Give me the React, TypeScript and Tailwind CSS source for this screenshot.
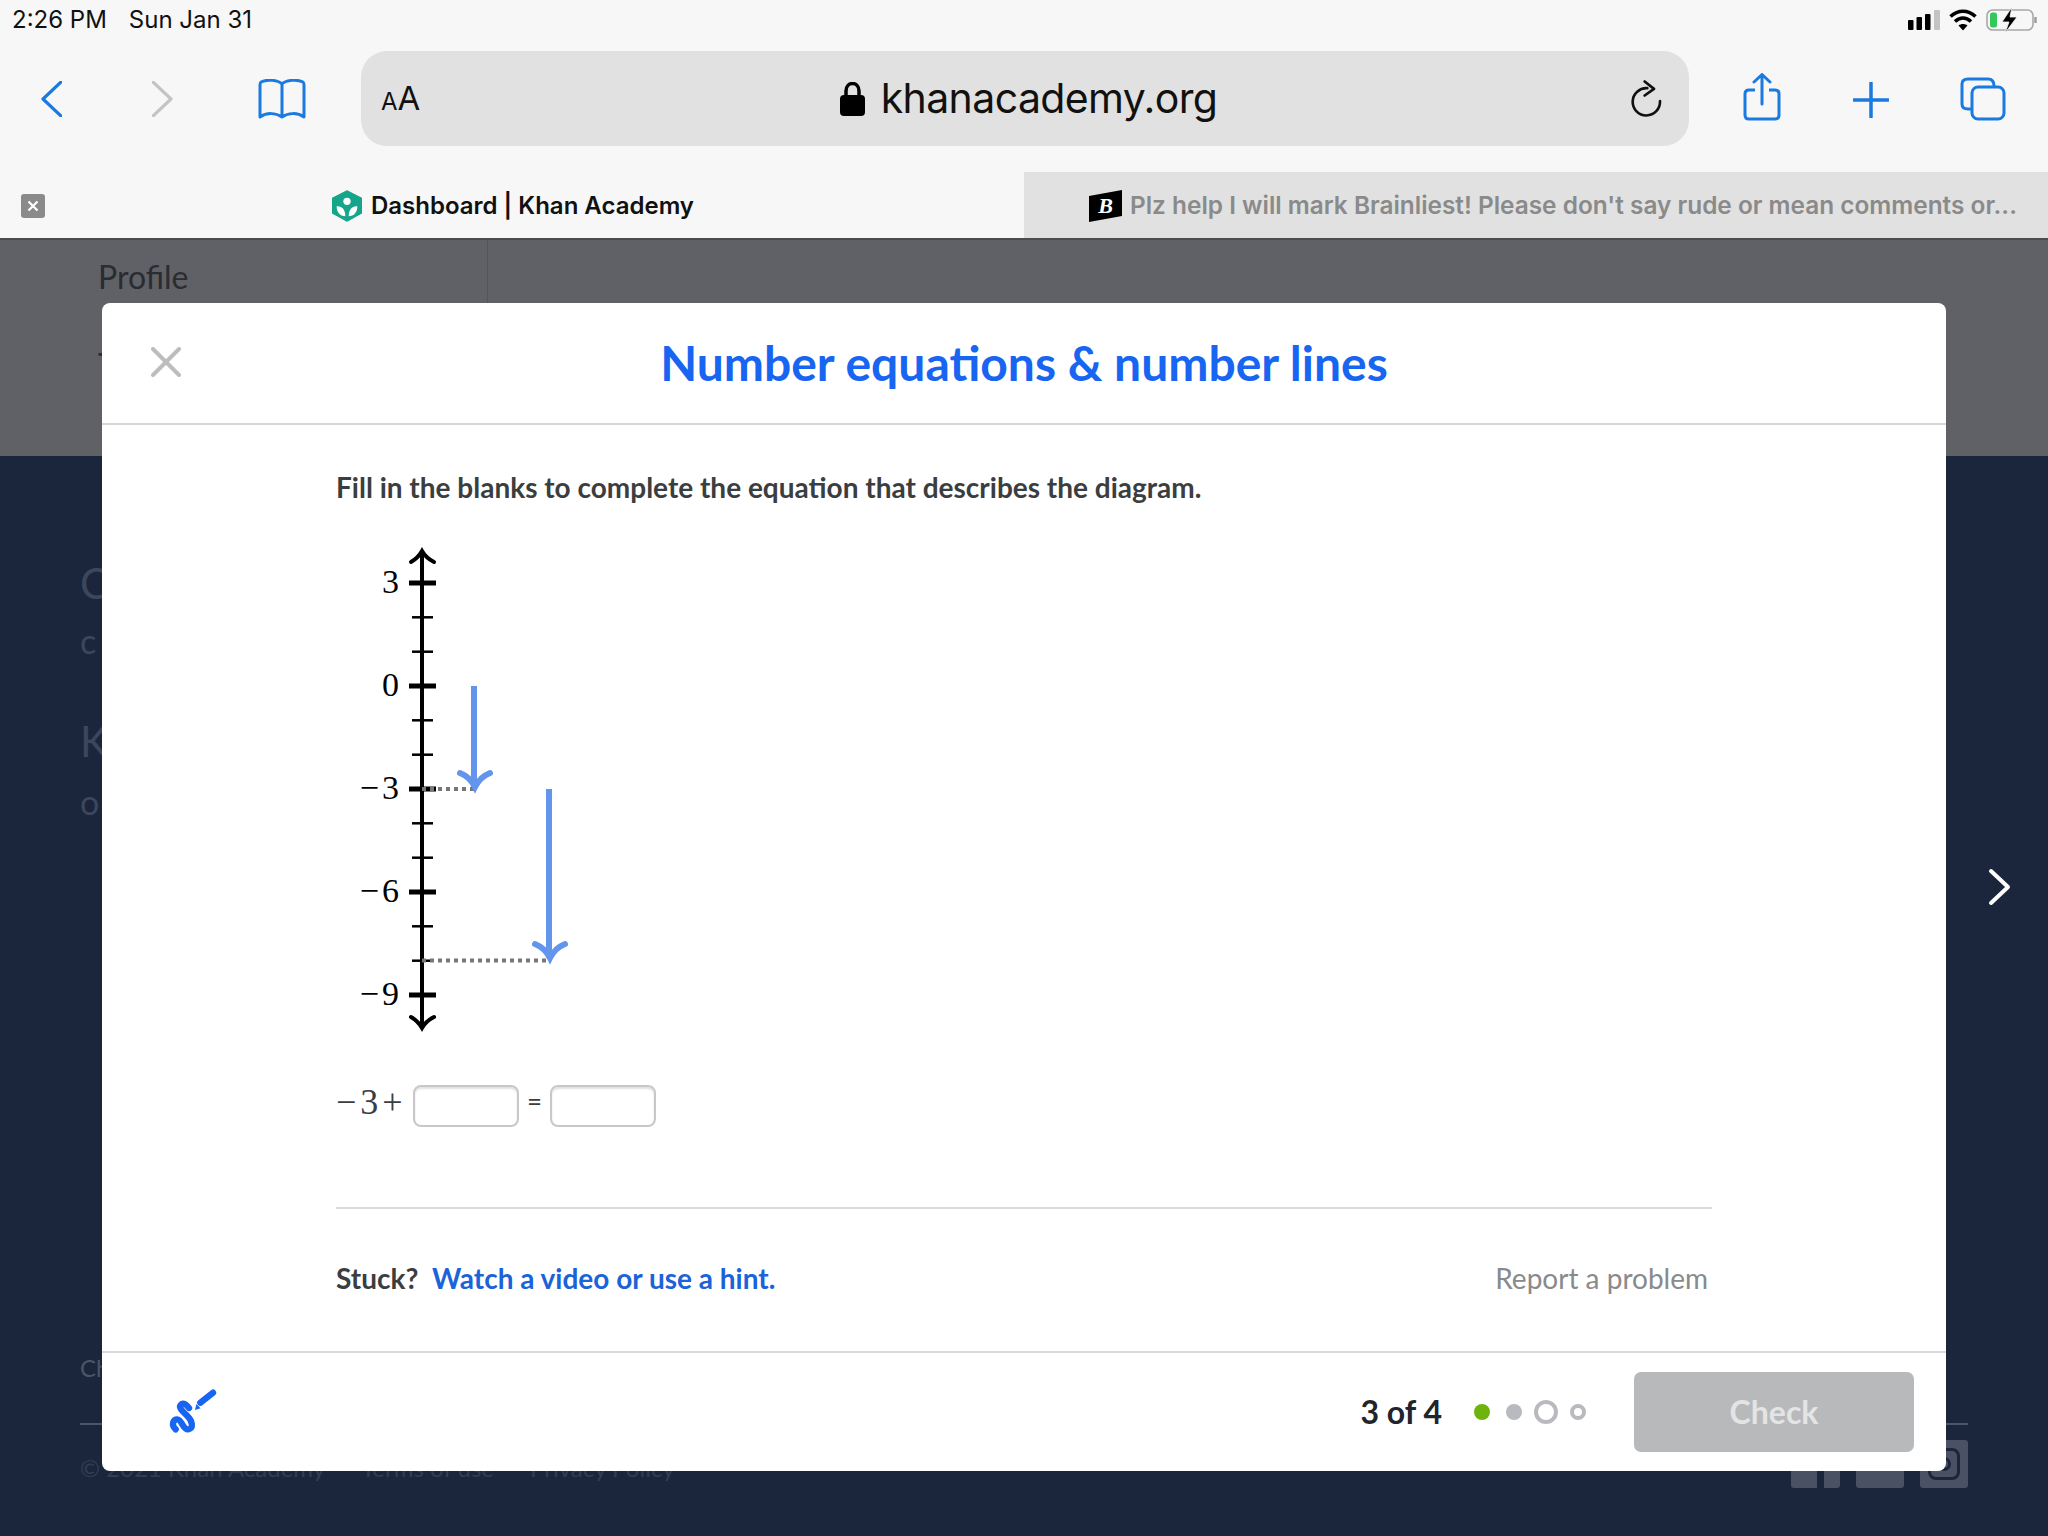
const MATH = "font-['Liberation_Serif',serif]";

const majors = [43, 146, 249, 352, 455];
const minors = [77.3, 111.7, 180.3, 214.7, 283.3, 317.7, 386.3, 420.7];

function Label({ t, y }: { t: string; y: number }) {
  const neg = t.length > 1;
  return (
    <text x="63" y={y + 10} textAnchor="end" fontSize="34" fontFamily="'Liberation Serif', serif" fill="#000">
      {neg ? "−" : ""}
      <tspan dx={neg ? 3 : 0}>{neg ? t.slice(1) : t}</tspan>
    </text>
  );
}

function NumberLine() {
  return (
    <svg width="240" height="500" viewBox="0 0 240 500" className="block">
      <line x1="86" y1="12" x2="86" y2="486" stroke="#000" strokeWidth="4" />
      <path d="M75 22 Q82 18 86 11 Q90 18 98 22" fill="none" stroke="#000" strokeWidth="4" strokeLinecap="round" />
      <path d="M75 477 Q82 481 86 488 Q90 481 98 477" fill="none" stroke="#000" strokeWidth="4" strokeLinecap="round" />
      {majors.map((y) => (
        <line key={y} x1="73" x2="100" y1={y} y2={y} stroke="#000" strokeWidth="5" />
      ))}
      {minors.map((y) => (
        <line key={y} x1="76" x2="97" y1={y} y2={y} stroke="#000" strokeWidth="2.5" />
      ))}
      <Label t="3" y={43} />
      <Label t="0" y={146} />
      <Label t="−3" y={249} />
      <Label t="−6" y={352} />
      <Label t="−9" y={455} />
      <line x1="86" x2="138" y1="249" y2="249" stroke="#777" strokeWidth="4" strokeDasharray="4 4" />
      <line x1="86" x2="212" y1="420.5" y2="420.5" stroke="#777" strokeWidth="4" strokeDasharray="4 4" />
      <line x1="138" x2="138" y1="146" y2="247" stroke="#6495ed" strokeWidth="6" />
      <path d="M124 233 Q134 237 139 247 Q144 237 154 233" fill="none" stroke="#6495ed" strokeWidth="6" strokeLinecap="round" />
      <line x1="213" x2="213" y1="249" y2="418" stroke="#6495ed" strokeWidth="6" />
      <path d="M199 404 Q209 408 214 418 Q219 408 229 404" fill="none" stroke="#6495ed" strokeWidth="6" strokeLinecap="round" />
    </svg>
  );
}

function Pencil() {
  return (
    <svg width="70" height="70" viewBox="0 0 210 210" className="mt-[6px] block">
      <path d="M50 148 C36 135 42 118 55 118 C68 118 72 150 88 148 C105 146 100 122 85 108 C72 95 55 82 68 72 C76 68 85 78 90 84" fill="none" stroke="#1865f2" strokeWidth="19" strokeLinecap="round" strokeLinejoin="round" />
      <path d="M162 38 L124 68" stroke="#1865f2" strokeWidth="19" strokeLinecap="round" />
      <path d="M108 90 L112 72 L125 85 Z" fill="#1865f2" />
    </svg>
  );
}

function StatusIcons() {
  return (
    <div className="flex items-center">
      <svg width="32" height="20" viewBox="0 0 32 20">
        <rect x="0" y="10" width="5.5" height="10" rx="1" fill="#000" />
        <rect x="8.5" y="7" width="5.5" height="13" rx="1" fill="#000" />
        <rect x="17" y="4" width="5.5" height="16" rx="1" fill="#000" />
        <rect x="26" y="0" width="6" height="20" rx="1" fill="#c4c4c4" />
      </svg>
      <svg width="28" height="22" viewBox="0 0 28 22" className="ml-[9px]">
        <path d="M1.5 7.5 C9 0.5 19 0.5 26.5 7.5" fill="none" stroke="#000" strokeWidth="3.6" />
        <path d="M6 12.5 C11 8 17 8 22 12.5" fill="none" stroke="#000" strokeWidth="3.6" />
        <path d="M9.5 16.5 C12 14.5 16 14.5 18.5 16.5 L14 21.5 Z" fill="#000" />
      </svg>
      <svg width="52" height="26" viewBox="0 0 52 26" className="ml-[9px]">
        <rect x="1" y="3" width="46" height="20" rx="5.5" fill="none" stroke="#a8a8a8" strokeWidth="1.6" />
        <rect x="4" y="5.5" width="7" height="15" rx="2.5" fill="#34c759" />
        <path d="M49.5 10 L49.5 16" fill="none" stroke="#999" strokeWidth="2.4" />
        <path d="M26 0 L16 15 L23 15 L19 26 L31 10 L24 10 Z" fill="#000" stroke="#f7f7f7" strokeWidth="0.8" />
      </svg>
    </div>
  );
}

function KhanLogo() {
  return (
    <svg width="30" height="32" viewBox="22 13 90 96" className="block">
      <path d="M67 15 L112 38 L112 82 L67 107 L22 82 L22 38 Z" fill="#14a58a" stroke="#14a58a" strokeWidth="3" strokeLinejoin="round" />
      <circle cx="67" cy="47" r="11" fill="#fff" />
      <path d="M36 62 C50 60 62 70 62 92 C46 92 36 80 36 62 Z" fill="#fff" />
      <path d="M98 62 C84 60 72 70 72 92 C88 92 98 80 98 62 Z" fill="#fff" />
    </svg>
  );
}

function BrainlyLogo() {
  return (
    <svg width="33" height="32" viewBox="0 0 33 32" className="block">
      <path d="M0 6 L33 0 L33 26 L0 32 Z" fill="#000" />
      <text x="16.5" y="23" textAnchor="middle" fontSize="22" fontWeight="700" fontStyle="italic" fontFamily="'Liberation Serif', serif" fill="#fff">B</text>
    </svg>
  );
}

function Toolbar() {
  const blue = "#1a7ae0";
  return (
    <div className="flex h-[132px] items-start">
      <svg width="21" height="36" viewBox="0 0 21 36" className="ml-[41px] mt-[41px] shrink-0">
        <path d="M20 1 L2 18 L20 35" fill="none" stroke={blue} strokeWidth="3.2" strokeLinecap="round" strokeLinejoin="round" />
      </svg>
      <svg width="21" height="36" viewBox="0 0 21 36" className="ml-[90px] mt-[41px] shrink-0">
        <path d="M1 1 L19 18 L1 35" fill="none" stroke="#c4c4c4" strokeWidth="3.2" strokeLinecap="round" strokeLinejoin="round" />
      </svg>
      <svg width="48" height="40" viewBox="0 0 48 40" className="ml-[85px] mt-[39px] shrink-0">
        <path d="M24 5 C20 1 9 0 3 3 C2 4 2 5 2 6 L2 38 C9 33 18 34 24 38 C30 34 39 33 46 38 L46 6 C46 5 46 4 45 3 C39 0 28 1 24 5 Z M24 5 L24 37" fill="none" stroke={blue} strokeWidth="3" strokeLinejoin="round" />
      </svg>
      <div className="ml-[55px] mt-[11px] flex h-[95px] w-[1328px] shrink-0 items-center rounded-[26px] bg-[#e1e1e1] pl-[20px] pr-[27px]">
        <span className="w-[40px] whitespace-nowrap font-['Inter',sans-serif] text-[#111]">
          <span className="text-[24px]">A</span>
          <span className="text-[33px]">A</span>
        </span>
        <div className="flex flex-1 items-center justify-center pl-[6px]">
          <svg width="25" height="34" viewBox="0 0 25 34" className="shrink-0">
            <path d="M6 15 L6 9 C6 -1 19 -1 19 9 L19 15" fill="none" stroke="#000" strokeWidth="3.5" />
            <rect x="0" y="13" width="25" height="21" rx="4" fill="#000" />
          </svg>
          <span className="ml-[16px] whitespace-nowrap font-['Inter',sans-serif] text-[41px] leading-none tracking-[-0.6px] text-[#111]">khanacademy.org</span>
        </div>
        <svg width="32" height="37" viewBox="28 32 96 110" className="shrink-0">
          <path d="M80 56 A41 41 0 1 0 118 95" fill="none" stroke="#111" strokeWidth="8" strokeLinecap="round" />
          <path d="M72 36 L100 58 L72 78" fill="none" stroke="#111" strokeWidth="8" strokeLinecap="round" strokeLinejoin="round" />
        </svg>
      </div>
      <svg width="38" height="48" viewBox="0 0 38 48" className="ml-[54px] mt-[33px] shrink-0">
        <path d="M12 17 L6 17 C3 17 2 19 2 21 L2 42 C2 45 4 46 6 46 L32 46 C35 46 36 44 36 42 L36 21 C36 19 35 17 32 17 L26 17" fill="none" stroke={blue} strokeWidth="3" />
        <path d="M19 31 L19 2 M11 9 L19 1.5 L27 9" fill="none" stroke={blue} strokeWidth="3" strokeLinecap="round" strokeLinejoin="round" />
      </svg>
      <svg width="36" height="36" viewBox="0 0 36 36" className="ml-[72px] mt-[42px] shrink-0">
        <path d="M18 1 L18 35 M1 18 L35 18" stroke={blue} strokeWidth="3.5" strokeLinecap="round" />
      </svg>
      <svg width="46" height="44" viewBox="0 0 46 44" className="ml-[71px] mt-[37px] shrink-0">
        <rect x="12" y="10" width="32" height="32" rx="6" fill="none" stroke={blue} strokeWidth="3" />
        <path d="M12 32 L8 32 C4 32 2 30 2 27 L2 7 C2 4 4 2 8 2 L28 2 C32 2 34 4 34 9" fill="none" stroke={blue} strokeWidth="3" />
      </svg>
    </div>
  );
}

function Modal() {
  return (
    <div className="absolute left-[102px] top-[303px] flex h-[1168px] w-[1844px] flex-col rounded-[8px] bg-white font-['Lato',sans-serif]">
      <div className="relative flex h-[122px] shrink-0 items-center justify-center border-b-2 border-[#d6d6d6]">
        <svg width="30" height="30" viewBox="0 0 30 30" className="absolute left-[49px] top-[44px]">
          <path d="M2 2 L28 28 M28 2 L2 28" stroke="#bdbdbd" strokeWidth="4" strokeLinecap="round" />
        </svg>
        <h1 className="text-[48px] font-bold leading-none text-[#1865f2]">Number equations &amp; number lines</h1>
      </div>
      <div className="flex flex-1 flex-col px-[234px]">
        <p className="mt-[45px] text-[28px] font-bold leading-[34px] text-[#3b3e40]">Fill in the blanks to complete the equation that describes the diagram.</p>
        <div className="mt-[36px]">
          <NumberLine />
        </div>
        <div className="mt-[45px] flex h-[42px] items-center">
          <span className={`${MATH} -mt-[8px] w-[77px] whitespace-nowrap text-[36px] tracking-[4px] text-[#3b3e40]`}>−3+</span>
          <div className="h-[42px] w-[106px] rounded-[8px] border-2 border-[#c8c8c8] shadow-[inset_0_2px_2px_rgba(0,0,0,0.12)]" />
          <span className="-mt-[10px] w-[31px] text-center text-[26px] text-[#3b3e40]">=</span>
          <div className="h-[42px] w-[106px] rounded-[8px] border-2 border-[#c8c8c8] shadow-[inset_0_2px_2px_rgba(0,0,0,0.12)]" />
        </div>
        <div className="mt-[80px] h-[2px] bg-[#dcdcdc]" />
        <div className="mt-[52px] flex items-center justify-between pr-[4px] text-[28px] leading-[34px]">
          <p className="font-bold text-[#3b3e40]">
            Stuck? <span className="ml-[7px] text-[#1b63d8]">Watch a video or use a hint.</span>
          </p>
          <span className="text-[#888a8c]">Report a problem</span>
        </div>
      </div>
      <div className="flex h-[120px] shrink-0 items-center border-t-2 border-[#d9d9d9] pl-[57px] pr-[32px]">
        <Pencil />
        <span className="ml-auto whitespace-nowrap text-[32px] font-bold text-[#21242c]">3 of 4</span>
        <div className="ml-[32px] flex items-center">
          <span className="h-[16px] w-[16px] rounded-full bg-[#6fb30f]" />
          <span className="ml-[16px] h-[16px] w-[16px] rounded-full bg-[#b8bac0]" />
          <span className="ml-[12px] h-[24px] w-[24px] rounded-full border-[4px] border-[#b8bac0]" />
          <span className="ml-[12px] h-[16px] w-[16px] rounded-full border-[4px] border-[#b8bac0]" />
        </div>
        <button className="ml-[48px] h-[80px] w-[280px] rounded-[7px] bg-[#b8b9bb] text-[32px] font-bold text-[#e4e4e4]">Check</button>
      </div>
    </div>
  );
}

function Social() {
  return (
    <div className="flex gap-[16px]">
      <div className="relative h-[48px] w-[49px] rounded-[3px] bg-[#4a5162]">
        <span className="absolute bottom-0 left-[26px] top-0 w-[7px] bg-[#1b263d]" />
      </div>
      <div className="relative h-[48px] w-[48px] rounded-[3px] bg-[#4a5162]">
        <span className="absolute left-[10px] top-[18px] h-[12px] w-[26px] rounded-b-full bg-[#1b263d]" />
      </div>
      <div className="relative flex h-[48px] w-[48px] items-center justify-center rounded-[3px] bg-[#4a5162]">
        <span className="flex h-[32px] w-[32px] items-center justify-center rounded-[8px] border-[3px] border-[#1b263d]">
          <span className="h-[14px] w-[14px] rounded-full border-[3px] border-[#1b263d]" />
        </span>
      </div>
    </div>
  );
}

export default function App() {
  return (
    <div className="relative flex h-[1536px] w-[2048px] flex-col overflow-hidden bg-[#1b263d]">
      <div className="bg-[#f7f7f7] font-['Inter',sans-serif]">
        <div className="flex h-[40px] items-center justify-between pl-[12px] pr-[10px] text-[24px] text-[#111]">
          <div className="flex gap-[22px] whitespace-nowrap">
            <span>2:26 PM</span>
            <span>Sun Jan 31</span>
          </div>
          <StatusIcons />
        </div>
        <Toolbar />
        <div className="flex h-[66px]">
          <div className="flex w-[1024px] items-center pt-[1px]">
            <span className="ml-[21px] flex h-[24px] w-[24px] items-center justify-center rounded-[3px] bg-[#8a8a8a]">
              <svg width="12" height="12" viewBox="0 0 12 12">
                <path d="M1.5 1.5 L10.5 10.5 M10.5 1.5 L1.5 10.5" stroke="#fff" strokeWidth="2.2" />
              </svg>
            </span>
            <span className="ml-[287px]">
              <KhanLogo />
            </span>
            <span className="ml-[9px] whitespace-nowrap text-[24px] font-semibold text-[#111]">Dashboard | Khan Academy</span>
          </div>
          <div className="flex w-[1024px] items-center bg-[#e1e1e1] pl-[65px] pt-[1px]">
            <BrainlyLogo />
            <span className="ml-[8px] whitespace-nowrap text-[24.4px] font-semibold text-[#8a8a8a]">Plz help I will mark Brainliest! Please don't say rude or mean comments or...</span>
          </div>
        </div>
      </div>

      <div className="flex h-[218px] shrink-0 border-t-2 border-[#4a4c50] bg-[#5f6166] font-['Lato',sans-serif]">
        <div className="w-[488px] border-r border-[#54565a] pl-[98px] pt-[18px] text-[32px] leading-[38px] text-[#2a2c31]">
          <p>Profile</p>
          <p className="mt-[50px]">Teacher</p>
        </div>
      </div>

      <div className="flex flex-1 flex-col px-[80px] font-['Lato',sans-serif] text-[#3c465c]">
        <p className="mt-[102px] text-[42px] leading-[50px]">Courses</p>
        <p className="mt-[13px] text-[34px] leading-[40px]">c</p>
        <p className="mt-[55px] text-[42px] leading-[50px]">Khan</p>
        <p className="mt-[16px] text-[34px] leading-[40px]">o</p>
        <p className="mt-[531px] text-[24px] leading-[30px] text-[#4c5567]">Change</p>
        <div className="mt-[40px] h-[2px] bg-[#4c5567]" />
        <div className="mt-[15px] flex items-start justify-between">
          <div className="mt-[13px] flex gap-[36px] whitespace-nowrap text-[24px] leading-[30px] text-[#333d52]">
            <span>© 2021 Khan Academy</span>
            <span>Terms of use</span>
            <span>Privacy Policy</span>
          </div>
          <Social />
        </div>
      </div>

      <Modal />

      <svg width="24" height="38" viewBox="0 0 24 38" className="absolute left-[1988px] top-[868px]">
        <path d="M3 3 L20 19 L3 35" fill="none" stroke="#fff" strokeWidth="4" strokeLinecap="round" strokeLinejoin="round" />
      </svg>
    </div>
  );
}
